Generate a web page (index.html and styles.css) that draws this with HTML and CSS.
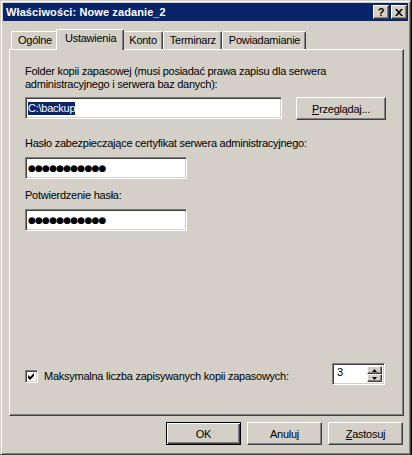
FILE: index.html
```html
<!DOCTYPE html>
<html>
<head>
    <meta charset="UTF-8">
    <title>Właściwości: Nowe zadanie_2</title>
    <link rel="stylesheet" href="styles.css">
</head>
<body>
    <div class="window">
        <div class="titlebar">
            <span class="title">Właściwości: Nowe zadanie_2</span>
            <div class="caption-buttons">
                <span class="cap-btn cap-help">?</span>
                <span class="cap-btn">
                    <svg width="8" height="7" viewBox="0 0 8 7">
                        <path d="M0 0h2l2 2.2L6 0h2L5 3.5 8 7H6L4 4.8 2 7H0l3-3.5z" fill="#000"/>
                    </svg>
                </span>
            </div>
        </div>

        <div class="client">
            <div class="tabs">
                <div class="tab">Ogólne</div>
                <div class="tab active">Ustawienia</div>
                <div class="tab">Konto</div>
                <div class="tab">Terminarz</div>
                <div class="tab">Powiadamianie</div>
            </div>

            <div class="panel">
                <div class="label">Folder kopii zapasowej (musi posiadać prawa zapisu dla serwera<br>administracyjnego i serwera baz danych):</div>
                <div class="row folder-row">
                    <div class="edit edit-folder"><span class="selected-text">C:\backup</span></div>
                    <div class="btn btn-browse"><u>P</u>rzeglądaj...</div>
                </div>

                <div class="label label-pass">Hasło zabezpieczające certyfikat serwera administracyjnego:</div>
                <div class="edit edit-pass"><span class="dots">●●●●●●●●●●●</span></div>

                <div class="label label-confirm">Potwierdzenie hasła:</div>
                <div class="edit edit-pass"><span class="dots">●●●●●●●●●●●</span></div>

                <div class="row check-row">
                    <span class="checkbox">
                        <svg width="9" height="9" viewBox="0 0 9 9">
                            <path d="M1 3l2 2 4-4v3l-4 4-2-2z" fill="#000"/>
                        </svg>
                    </span>
                    <span class="check-label">Maksymalna liczba zapisywanych kopii zapasowych:</span>
                    <div class="spin">
                        <span class="spin-value">3</span>
                        <div class="spin-buttons">
                            <span class="spin-btn">
                                <svg width="5" height="3" viewBox="0 0 5 3"><path d="M2.5 0L5 3H0z" fill="#000"/></svg>
                            </span>
                            <span class="spin-btn">
                                <svg width="5" height="3" viewBox="0 0 5 3"><path d="M0 0h5L2.5 3z" fill="#000"/></svg>
                            </span>
                        </div>
                    </div>
                </div>
            </div>

            <div class="buttons">
                <div class="btn btn-default">OK</div>
                <div class="btn">Anuluj</div>
                <div class="btn"><u>Z</u>astosuj</div>
            </div>
        </div>
    </div>
</body>
</html>
```

FILE: styles.css
```css
html, body {
    margin: 0;
    padding: 0;
    background-color: #000;
}
body {
    font-family: "Liberation Sans", Arial, sans-serif;
    font-size: 11px;
    letter-spacing: -0.25px;
    color: #000;
}
.window {
    width: 411px;
    height: 455px;
    box-sizing: border-box;
    background-color: #d4d0c8;
    border: 1px solid;
    border-color: #d4d0c8 #404040 #404040 #d4d0c8;
    box-shadow: inset 1px 1px #fff, inset -1px -1px #808080;
    padding: 2px;
    display: flex;
    flex-direction: column;
}
.titlebar {
    height: 18px;
    flex: none;
    background-color: #0a246a;
    color: #fff;
    display: flex;
    align-items: center;
    justify-content: space-between;
    padding: 0 1px 0 3px;
}
.title {
    font-weight: bold;
    font-size: 11px;
    letter-spacing: 0.1px;
}
.caption-buttons {
    display: flex;
    gap: 2px;
}
.cap-btn {
    width: 16px;
    height: 14px;
    box-sizing: border-box;
    background-color: #d4d0c8;
    border: 1px solid;
    border-color: #fff #404040 #404040 #fff;
    box-shadow: inset -1px -1px #808080;
    display: flex;
    align-items: center;
    justify-content: center;
    color: #000;
}
.cap-help {
    font-weight: bold;
    font-size: 11px;
    line-height: 12px;
}
.client {
    flex: 1;
    display: flex;
    flex-direction: column;
    padding: 8px 4px 0 6px;
}
.tabs {
    height: 20px;
    flex: none;
    display: flex;
    align-items: flex-end;
    padding-left: 2px;
}
.tab {
    height: 18px;
    box-sizing: border-box;
    border: 1px solid;
    border-bottom: none;
    border-color: #fff #404040 #fff #fff;
    box-shadow: inset -1px 0 #808080;
    border-radius: 2px 2px 0 0;
    padding: 2px 5px 0 6px;
    line-height: 13px;
    white-space: nowrap;
}
.tab.active {
    height: 21px;
    margin: 0 -2px -1px -2px;
    padding: 2px 7px 0 8px;
    background-color: #d4d0c8;
    position: relative;
    z-index: 1;
}
.panel {
    height: 367px;
    flex: none;
    box-sizing: border-box;
    border: 1px solid;
    border-color: #fff #404040 #404040 #fff;
    box-shadow: inset -1px -1px #808080;
    padding: 15px 17px 30px 15px;
    display: flex;
    flex-direction: column;
}
.label {
    line-height: 13px;
}
.row {
    display: flex;
}
.folder-row {
    margin-top: 6px;
    align-items: flex-start;
}
.edit {
    box-sizing: border-box;
    height: 22px;
    background-color: #fff;
    border: 1px solid;
    border-color: #808080 #fff #fff #808080;
    box-shadow: inset 1px 1px #404040, inset -1px -1px #d4d0c8;
    display: flex;
    align-items: center;
    padding-left: 2px;
}
.edit-folder {
    width: 257px;
}
.selected-text {
    background-color: #0a246a;
    color: #fff;
    line-height: 13px;
}
.btn {
    box-sizing: border-box;
    width: 75px;
    height: 23px;
    background-color: #d4d0c8;
    border: 1px solid;
    border-color: #fff #404040 #404040 #fff;
    box-shadow: inset -1px -1px #808080;
    display: flex;
    align-items: center;
    justify-content: center;
}
.btn-browse {
    width: 90px;
    margin-left: auto;
}
.label-pass {
    margin-top: 17px;
}
.label-confirm {
    margin-top: 10px;
}
.edit-pass {
    width: 162px;
    margin-top: 7px;
}
.dots {
    font-family: "DejaVu Sans", sans-serif;
    font-size: 9px;
    letter-spacing: -0.8px;
}
.check-row {
    margin-top: auto;
    align-items: flex-start;
}
.checkbox {
    width: 13px;
    height: 13px;
    box-sizing: border-box;
    background-color: #fff;
    border: 1px solid;
    border-color: #808080 #fff #fff #808080;
    box-shadow: inset 1px 1px #404040, inset -1px -1px #d4d0c8;
    display: flex;
    align-items: center;
    justify-content: center;
    margin-top: 7px;
}
.check-label {
    margin-left: 6px;
    margin-top: 7px;
    line-height: 13px;
}
.spin {
    margin-left: auto;
    margin-right: 1px;
    width: 53px;
    height: 22px;
    box-sizing: border-box;
    background-color: #fff;
    border: 1px solid;
    border-color: #808080 #fff #fff #808080;
    box-shadow: inset 1px 1px #404040, inset -1px -1px #d4d0c8;
    display: flex;
    padding: 2px 2px 2px 4px;
}
.spin-value {
    flex: 1;
    line-height: 13px;
}
.spin-buttons {
    width: 15px;
    display: flex;
    flex-direction: column;
}
.spin-btn {
    flex: 1;
    box-sizing: border-box;
    background-color: #d4d0c8;
    border: 1px solid;
    border-color: #fff #404040 #404040 #fff;
    box-shadow: inset -1px -1px #808080;
    display: flex;
    align-items: center;
    justify-content: center;
}
.buttons {
    display: flex;
    justify-content: flex-end;
    gap: 6px;
    margin-top: 6px;
    padding-right: 1px;
}
.btn-default {
    border: 1px solid #000;
    box-shadow: inset 1px 1px #fff, inset -1px -1px #404040, inset -2px -2px #808080;
}
```
